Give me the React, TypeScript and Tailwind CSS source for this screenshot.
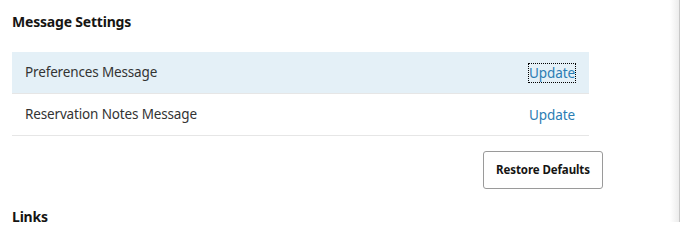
import React from "react"

const rows = [
  { name: "Preferences Message", focused: true },
  { name: "Reservation Notes Message", focused: false },
]

const App = () => {
  return (
    <div className="flex h-[222px] w-[680px] overflow-hidden bg-white font-['Noto_Sans',sans-serif] text-[#161513]">
      <div className="flex-1 pl-3 pt-[13px]">
        <h2 className="text-[14px] font-bold leading-[18px] tracking-[-0.2px]">Message Settings</h2>

        <div className="mt-[21px] w-[577px]">
          {rows.map((row) => (
            <div
              key={row.name}
              className={`flex h-[42px] items-center justify-between border-b border-[#e6e6e6] pl-[13px] pr-[13px] ${row.focused ? "bg-[#e4f0f7]" : ""}`}
            >
              <span className="text-[13.5px] tracking-[-0.15px] text-[#333333]">{row.name}</span>
              <span
                className={`text-[13.5px] leading-[18px] tracking-[-0.1px] text-[#2b7db4] ${row.focused ? "border border-dotted border-black" : "border border-transparent"}`}
              >
                Update
              </span>
            </div>
          ))}
        </div>

        <div className="flex w-[591px] justify-end pt-[15px]">
          <button className="h-[38px] w-[120px] rounded-[3px] border border-[#9a9a9a] bg-white text-[11.5px] font-bold tracking-[-0.1px] text-[#161513]">
            Restore Defaults
          </button>
        </div>

        <h2 className="mt-[19px] text-[14px] font-bold leading-[18px] tracking-[-0.2px]">Links</h2>
      </div>
      <div className="w-[10px] border-r border-[#c8c8c8] bg-gradient-to-r from-white to-[#ececec]" />
    </div>
  )
}

export default App
